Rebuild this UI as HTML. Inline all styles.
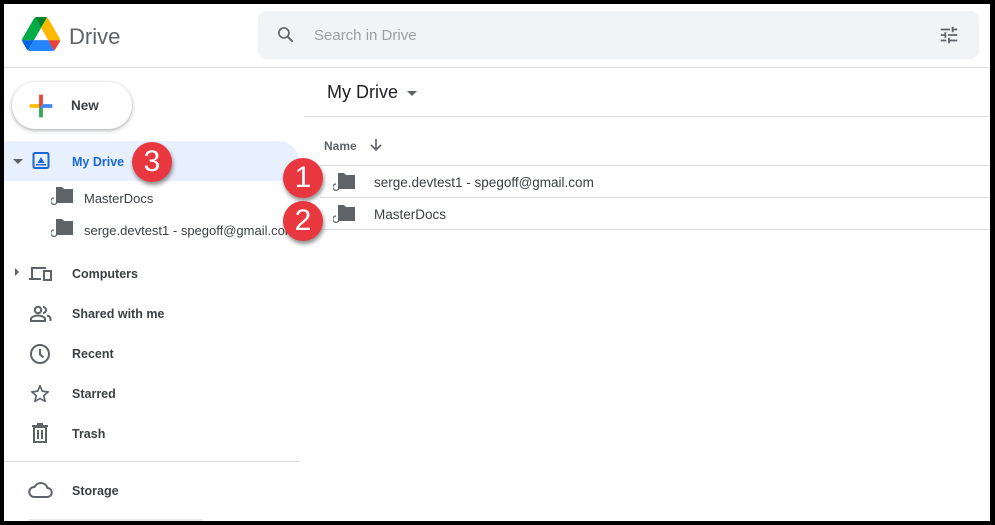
<!DOCTYPE html>
<html><head><meta charset="utf-8"><style>
*{margin:0;padding:0;box-sizing:border-box}
body{width:995px;height:525px;background:#000;position:relative;overflow:hidden;font-family:"Liberation Sans",Arial,sans-serif;color:#3c4043}
#pg{position:absolute;left:4px;top:4px;width:986px;height:517px;background:#fff;overflow:hidden}
.a{position:absolute}
.t{font-size:12.5px;color:#3c4043;font-weight:bold}
.badge{position:absolute;width:40px;height:40px;border-radius:50%;background:#e8373f;color:#fff;font-size:30px;text-align:center;line-height:40px;box-shadow:1px 3px 4px rgba(0,0,0,.45);font-family:"Liberation Sans",sans-serif}
.fold{position:absolute;width:24px;height:20px}
</style></head><body><div id="pg">
<svg class="a" style="left:18px;top:13px" width="38" height="34" viewBox="0 0 87 78"><path d="M6.6 66.85l3.85 6.65c.8 1.4 1.95 2.5 3.3 3.3L27.5 53H0c0 1.55.4 3.1 1.2 4.5z" fill="#0066da"/><path d="M43.65 25L29.9 1.2c-1.35.8-2.5 1.9-3.3 3.3l-25.4 44A9.06 9.060 0 000 53h27.5z" fill="#00ac47"/><path d="M73.55 76.8c1.35-.8 2.5-1.9 3.3-3.3l1.6-2.75 7.650-13.25c.8-1.4 1.2-2.95 1.2-4.5H59.8l5.85 11.5z" fill="#ea4335"/><path d="M43.65 25L57.4 1.2C56.05.4 54.5 0 52.9 0H34.4c-1.6 0-3.15.45-4.5 1.2z" fill="#00832d"/><path d="M59.8 53H27.5L13.75 76.8c1.35.8 2.9 1.2 4.5 1.2h50.8c1.6 0 3.15-.45 4.5-1.2z" fill="#2684fc"/><path d="M73.4 26.5l-12.7-22c-.8-1.4-1.95-2.5-3.3-3.3L43.65 25 59.8 53h27.45c0-1.55-.4-3.1-1.2-4.5z" fill="#ffba00"/></svg>
<div class="a" style="left:65px;top:20px;font-size:22px;color:#5f6368">Drive</div>
<div class="a" style="left:254px;top:7px;width:721px;height:48px;background:#f1f3f4;border-radius:8px"></div>
<svg class="a" style="left:272px;top:21px" width="20" height="20" viewBox="0 0 24 24"><circle cx="9.5" cy="9.5" r="6" fill="none" stroke="#5f6368" stroke-width="2"/><path d="M14 14l6 6" stroke="#5f6368" stroke-width="2.4"/></svg>
<div class="a" style="left:310px;top:23px;font-size:15px;color:#9aa0a6">Search in Drive</div>
<svg class="a" style="left:934px;top:20px" width="22" height="22" viewBox="0 0 24 24" fill="#5f6368"><path d="M3 17v2h6v-2H3zM3 5v2h10V5H3zm10 16v-2h8v-2h-8v-2h-2v6h2zM7 9v2H3v2h4v2h2V9H7zm14 4v-2H11v2h10zm-6-4h2V7h4V5h-4V3h-2v6z"/></svg>
<div class="a" style="left:0;top:63px;width:986px;height:1px;background:#dadce0"></div>
<div class="a" style="left:8px;top:78px;width:120px;height:47px;border-radius:24px;background:#fff;box-shadow:0 1px 3px rgba(60,64,67,.35),0 2px 6px rgba(60,64,67,.15)"></div>
<svg class="a" style="left:20px;top:85px" width="34" height="34" viewBox="0 0 36 36"><path fill="#34A853" d="M16 16v14h4V20z"/><path fill="#4285F4" d="M30 16H20l-4 4h14z"/><path fill="#FBBC05" d="M6 16v4h10l4-4z"/><path fill="#EA4335" d="M20 16V6h-4v14z"/></svg>
<div class="a" style="left:67px;top:94px;font-size:13.5px;color:#3c4043;font-weight:bold">New</div>
<div class="a" style="left:0;top:137px;width:295px;height:40px;background:#e8f0fe;border-radius:0 20px 20px 0"></div>
<div class="a" style="left:9px;top:155px;width:0;height:0;border-left:5px solid transparent;border-right:5px solid transparent;border-top:5px solid #5f6368"></div>
<svg class="a" style="left:27px;top:147px" width="20" height="20" viewBox="0 0 20 20"><rect x="2.5" y="2" width="15" height="15" rx="1.5" fill="none" stroke="#1967d2" stroke-width="2"/><path d="M10 6l3.5 6h-7z" fill="#1967d2"/><rect x="5" y="13" width="10" height="1.5" fill="#1967d2"/></svg>
<div class="a t" style="left:68px;top:151px;color:#1967d2">My Drive</div>
<svg class="fold" style="left:47px;top:182px" viewBox="0 0 24 20"><path d="M5 1h6l2 2h9v14H5z" fill="#5f6368"/><path d="M3 12a3.2 3.2 0 1 0 3.2 3.2" fill="none" stroke="#5f6368" stroke-width="1.2"/></svg>
<div class="a" style="left:80px;top:187px;font-size:13px;color:#3c4043">MasterDocs</div>
<svg class="fold" style="left:47px;top:214px" viewBox="0 0 24 20"><path d="M5 1h6l2 2h9v14H5z" fill="#5f6368"/><path d="M3 12a3.2 3.2 0 1 0 3.2 3.2" fill="none" stroke="#5f6368" stroke-width="1.2"/></svg>
<div class="a" style="left:80px;top:219px;font-size:13px;color:#3c4043;white-space:nowrap">serge.devtest1 - spegoff@gmail.com</div>
<div class="a" style="left:11px;top:264px;width:0;height:0;border-top:4px solid transparent;border-bottom:4px solid transparent;border-left:4px solid #5f6368"></div>
<svg class="a" style="left:24px;top:259px" width="26" height="20" viewBox="0 0 26 20"><path d="M3 4h15v2H5v9H3z M1 15h12v2H1z" fill="#5f6368"/><rect x="16" y="8" width="7" height="9" fill="none" stroke="#5f6368" stroke-width="2"/></svg>
<div class="a t" style="left:68px;top:263px">Computers</div>
<svg class="a" style="left:25px;top:300px" width="24" height="20" viewBox="0 0 24 20"><circle cx="9" cy="6" r="3.2" fill="none" stroke="#5f6368" stroke-width="2"/><path d="M2 17v-2c0-2 4-3.5 7-3.5s7 1.5 7 3.5v2z" fill="none" stroke="#5f6368" stroke-width="2"/><path d="M14 3a3 3 0 0 1 0 6M18 11.5c2 .5 3.5 1.5 3.5 3.5v2" fill="none" stroke="#5f6368" stroke-width="2"/></svg>
<div class="a t" style="left:68px;top:303px">Shared with me</div>
<svg class="a" style="left:25px;top:339px" width="22" height="22" viewBox="0 0 22 22"><circle cx="11" cy="11" r="9" fill="none" stroke="#5f6368" stroke-width="2"/><path d="M11 6v5.5l3.5 3" fill="none" stroke="#5f6368" stroke-width="2"/></svg>
<div class="a t" style="left:68px;top:343px">Recent</div>
<svg class="a" style="left:25px;top:379px" width="22" height="22" viewBox="0 0 24 24"><path d="M12 3l2.6 6 6.4.6-4.9 4.2 1.5 6.3L12 16.8 6.4 20.1l1.5-6.3L3 9.6l6.4-.6z" fill="none" stroke="#5f6368" stroke-width="1.8" stroke-linejoin="round"/></svg>
<div class="a t" style="left:68px;top:383px">Starred</div>
<svg class="a" style="left:26px;top:419px" width="20" height="22" viewBox="0 0 20 22"><path d="M2 3h16M7 1h6" stroke="#5f6368" stroke-width="2"/><rect x="4" y="4" width="12" height="15" fill="none" stroke="#5f6368" stroke-width="2"/><path d="M8 7v9M12 7v9" stroke="#5f6368" stroke-width="2"/></svg>
<div class="a t" style="left:68px;top:423px">Trash</div>
<div class="a" style="left:0;top:457px;width:296px;height:1px;background:#dadce0"></div>
<svg class="a" style="left:23px;top:476px" width="26" height="20" viewBox="0 0 26 20"><path d="M7 17h13a4.5 4.5 0 0 0 .5-9A7 7 0 0 0 7.5 7 5 5 0 0 0 7 17z" fill="none" stroke="#5f6368" stroke-width="2"/></svg>
<div class="a t" style="left:68px;top:480px">Storage</div>
<div class="a" style="left:24px;top:515px;width:175px;height:4px;background:#e8eaed;border-radius:2px"></div>
<div class="a" style="left:323px;top:78px;font-size:18px;color:#202124">My Drive</div>
<div class="a" style="left:403px;top:87px;width:0;height:0;border-left:5px solid transparent;border-right:5px solid transparent;border-top:5px solid #5f6368"></div>
<div class="a" style="left:300px;top:112px;width:686px;height:1px;background:#dadce0"></div>
<div class="a t" style="left:320px;top:135px;font-size:12px;color:#5f6368">Name</div>
<svg class="a" style="left:364px;top:133px" width="16" height="16" viewBox="0 0 16 16"><path d="M8 2v11M3 8l5 5 5-5" fill="none" stroke="#5f6368" stroke-width="1.6"/></svg>
<div class="a" style="left:316px;top:161px;width:670px;height:1px;background:#dadce0"></div>
<div class="a" style="left:316px;top:193px;width:670px;height:1px;background:#dadce0"></div>
<div class="a" style="left:316px;top:225px;width:670px;height:1px;background:#dadce0"></div>
<svg class="fold" style="left:329px;top:168px" viewBox="0 0 24 20"><path d="M5 1h6l2 2h9v14H5z" fill="#5f6368"/><path d="M3 12a3.2 3.2 0 1 0 3.2 3.2" fill="none" stroke="#5f6368" stroke-width="1.2"/></svg>
<div class="a" style="left:370px;top:171px;font-size:13.5px;color:#3c4043">serge.devtest1 - spegoff@gmail.com</div>
<svg class="fold" style="left:329px;top:200px" viewBox="0 0 24 20"><path d="M5 1h6l2 2h9v14H5z" fill="#5f6368"/><path d="M3 12a3.2 3.2 0 1 0 3.2 3.2" fill="none" stroke="#5f6368" stroke-width="1.2"/></svg>
<div class="a" style="left:370px;top:203px;font-size:13.5px;color:#3c4043">MasterDocs</div>
<div class="badge" style="left:128px;top:138px">3</div>
<div class="badge" style="left:279px;top:154px">1</div>
<div class="badge" style="left:279px;top:197px">2</div>
</div></body></html>
